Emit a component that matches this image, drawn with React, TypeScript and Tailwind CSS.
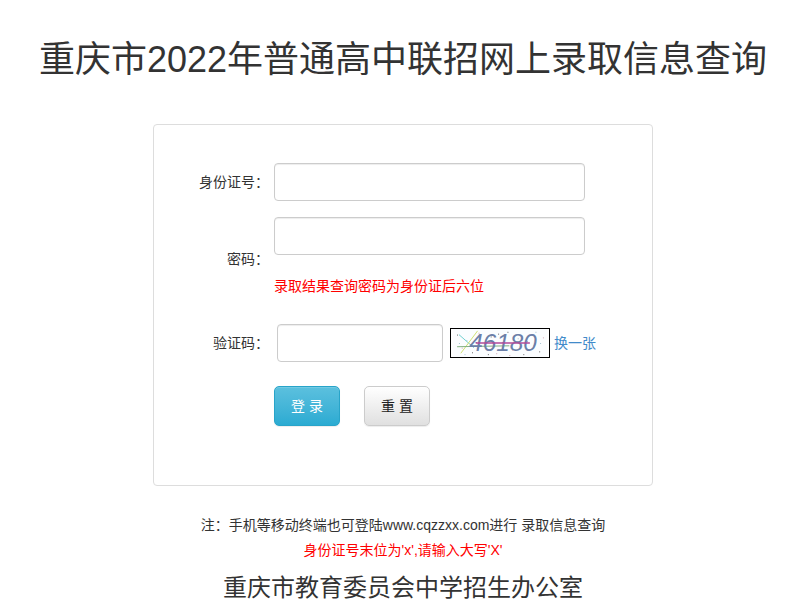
import React from 'react';

const font = { fontFamily: '"Liberation Sans", "Noto Sans CJK SC", sans-serif' };

const Captcha: React.FC = () => (
  <svg width="100" height="30" viewBox="0 0 100 30" className="border border-black bg-white">
    <rect x="0" y="0" width="100" height="30" fill="#fbfdff" />
    {[
      [4, 6], [9, 20], [14, 12], [20, 25], [27, 4], [33, 18], [40, 8], [46, 26], [52, 14],
      [58, 3], [63, 22], [69, 10], [75, 27], [81, 6], [86, 17], [92, 24], [96, 9], [12, 27],
      [37, 27], [60, 28], [88, 3], [24, 14], [71, 18], [6, 15], [48, 5], [79, 13], [93, 15],
    ].map(([x, y], i) => (
      <rect key={i} x={x} y={y} width="1" height="1" fill={i % 3 === 0 ? '#555' : i % 3 === 1 ? '#c9a' : '#9bc'} />
    ))}
    <line x1="6" y1="6" x2="22" y2="20" stroke="#6cc" strokeWidth="1" />
    <line x1="8" y1="26" x2="26" y2="2" stroke="#cd6" strokeWidth="1" />
    <line x1="4" y1="19" x2="60" y2="18" stroke="#7a7" strokeWidth="1" />
    <text
      x="17"
      y="24"
      fontSize="26"
      fontStyle="italic"
      fill="#6b7fa8"
      style={{ fontFamily: '"Liberation Sans", sans-serif' }}
    >
      46180
    </text>
    <line x1="24" y1="15" x2="82" y2="15" stroke="#b04a9a" strokeWidth="1.5" />
  </svg>
);

const inputCls =
  'h-[38px] rounded-[4px] border border-[#ccc] bg-white shadow-[inset_0_1px_1px_rgba(0,0,0,0.075)] outline-none px-3 text-[14px]';

const App: React.FC = () => {
  return (
    <div className="min-h-screen bg-white text-[#333] pl-[17px]" style={font}>
      <div className="flex flex-col items-center">
        <h1 className="mt-[40px] text-[36px] leading-[40px] font-normal whitespace-nowrap">
          重庆市2022年普通高中联招网上录取信息查询
        </h1>

        <div className="mt-[44px] w-[500px] rounded-[4px] border border-[#ddd] bg-white pt-[38px] pb-[59px]">
          {/* 身份证号 */}
          <div className="flex items-center">
            <label className="w-[115px] text-right text-[14px] leading-[20px]">身份证号：</label>
            <input className={`ml-[5px] w-[311px] ${inputCls}`} />
          </div>

          {/* 密码 */}
          <div className="mt-[16px] flex items-center">
            <label className="w-[115px] text-right text-[14px] leading-[20px]">密码：</label>
            <div className="ml-[5px] flex flex-col pb-[4px]">
              <input type="password" className={`w-[311px] ${inputCls}`} />
              <div className="mt-[21px] text-[14px] leading-[20px] text-[#f00]">录取结果查询密码为身份证后六位</div>
            </div>
          </div>

          {/* 验证码 */}
          <div className="mt-[24px] flex items-center">
            <label className="w-[115px] text-right text-[14px] leading-[20px]">验证码：</label>
            <input className={`ml-[8px] w-[166px] ${inputCls}`} />
            <div className="ml-[7px] flex">
              <Captcha />
            </div>
            <a className="ml-[4px] text-[14px] leading-[20px] text-[#428bca] cursor-pointer">换一张</a>
          </div>

          {/* buttons */}
          <div className="mt-[24px] flex pl-[120px] gap-[24px]">
            <button className="h-[40px] w-[66px] rounded-[5px] border border-[#28a4c9] bg-gradient-to-b from-[#5bc0de] to-[#2aabd2] text-[14px] tracking-[4px] pl-[4px] text-white shadow-[inset_0_1px_0_rgba(255,255,255,0.15),0_1px_1px_rgba(0,0,0,0.075)]">
              登录
            </button>
            <button className="h-[40px] w-[66px] rounded-[5px] border border-[#ccc] bg-gradient-to-b from-white to-[#e0e0e0] text-[14px] tracking-[4px] pl-[4px] text-[#222] shadow-[inset_0_1px_0_rgba(255,255,255,0.15),0_1px_1px_rgba(0,0,0,0.075)]">
              重置
            </button>
          </div>
        </div>

        <p className="mt-[29px] text-[14px] leading-[20px] text-[#333] whitespace-nowrap">
          注：手机等移动终端也可登陆www.cqzzxx.com进行 录取信息查询
        </p>
        <p className="mt-[5px] text-[14px] leading-[20px] text-[#f00] whitespace-nowrap">
          身份证号末位为'x',请输入大写'X'
        </p>
        <p className="mt-[12px] text-[24px] leading-[32px] text-[#333] whitespace-nowrap">
          重庆市教育委员会中学招生办公室
        </p>
      </div>
    </div>
  );
};

export default App;
